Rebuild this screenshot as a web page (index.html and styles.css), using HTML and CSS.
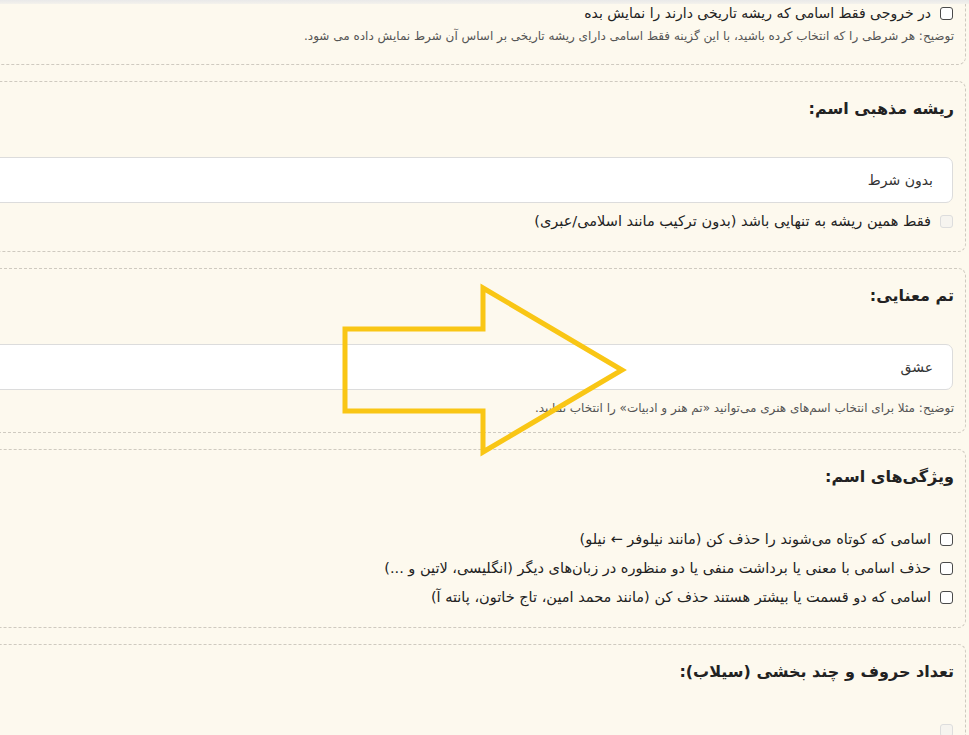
FILE: index.html
```html
<!DOCTYPE html>
<html lang="fa" dir="rtl">
  <head>
    <meta charset="utf-8">
    <link rel="stylesheet" href="styles.css">
  </head>
  <body>
    <div class="topbar"></div>
    <form class="filters">
      <section class="card card--cut">
        <label class="check">
          <input type="checkbox" class="check__box">
          <span>در خروجی فقط اسامی که ریشه تاریخی دارند را نمایش بده</span>
        </label>
        <p class="hint">توضیح: هر شرطی را که انتخاب کرده باشید، با این گزینه فقط اسامی دارای ریشه تاریخی بر اساس آن شرط نمایش داده می شود.</p>
      </section>

      <section class="card">
        <h3 class="card__title">ریشه مذهبی اسم:</h3>
        <div class="field">بدون شرط</div>
        <label class="check check--disabled">
          <input type="checkbox" class="check__box" disabled>
          <span>فقط همین ریشه به تنهایی باشد (بدون ترکیب مانند اسلامی/عبری)</span>
        </label>
      </section>

      <section class="card card--tight">
        <h3 class="card__title">تم معنایی:</h3>
        <div class="field">عشق</div>
        <p class="hint">توضیح: مثلا برای انتخاب اسم‌های هنری می‌توانید «تم هنر و ادبیات» را انتخاب نمایید.</p>
      </section>

      <section class="card">
        <h3 class="card__title card__title--spaced">ویژگی‌های اسم:</h3>
        <label class="check">
          <input type="checkbox" class="check__box">
          <span>اسامی که کوتاه می‌شوند را حذف کن (مانند نیلوفر ← نیلو)</span>
        </label>
        <label class="check">
          <input type="checkbox" class="check__box">
          <span>حذف اسامی با معنی یا برداشت منفی یا دو منظوره در زبان‌های دیگر (انگلیسی، لاتین و ...)</span>
        </label>
        <label class="check">
          <input type="checkbox" class="check__box">
          <span>اسامی که دو قسمت یا بیشتر هستند حذف کن (مانند محمد امین، تاج خاتون، پانته آ)</span>
        </label>
      </section>

      <section class="card">
        <h3 class="card__title card__title--spaced">تعداد حروف و چند بخشی (سیلاب):</h3>
        <label class="check check--disabled">
          <input type="checkbox" class="check__box" disabled aria-label="تک بخشی">
        </label>
      </section>
    </form>

    <!-- the yellow arrow drawn over the screenshot -->
    <svg class="arrow" width="969" height="735" viewBox="0 0 969 735">
      <polygon points="345,329 483,329 483,288 622,370 483,452 483,411 345,411"
               fill="none" stroke="#f9c615" stroke-width="5" stroke-linejoin="miter"/>
    </svg>
  </body>
</html>
```

FILE: styles.css
```css
* {
  box-sizing: border-box;
  margin: 0;
  padding: 0;
}

html, body {
  overflow: hidden;
}

body {
  font-family: "DejaVu Sans", "Noto Sans", sans-serif;
  color: #222;
  background: #fdf9ee;
  height: 735px;
}

.topbar {
  height: 4px;
  background: linear-gradient(#e9e9e9, #f4f2ec);
}

.filters {
  width: 1500px;
  margin-right: 3px;
}

.card {
  border: 1px dashed #cfcac0;
  border-radius: 8px;
  padding: 15px 11px 20px 11px;
  margin-bottom: 16px;
  background: #fdf9ee;
}

.card--cut {
  border-top: 0;
  border-radius: 0 0 8px 8px;
  padding-top: 0;
  padding-bottom: 18px;
}

.card--tight {
  padding-bottom: 14px;
}

.card__title {
  font-size: 16px;
  font-weight: bold;
  line-height: 24px;
  margin-bottom: 36px;
  color: #222;
}

.card__title--spaced {
  margin-bottom: 40px;
}

.field {
  height: 46px;
  width: 1488px;
  margin-right: 1px;
  background: #fff;
  border: 1px solid #dcdcdc;
  border-radius: 7px;
  padding: 0 19px;
  font-size: 14px;
  line-height: 44px;
  color: #333;
}

.check {
  display: flex;
  align-items: center;
  gap: 9px;
  font-size: 14.5px;
  line-height: 20px;
  margin-top: 9px;
  color: #222;
}

.card--cut .check {
  font-size: 14px;
  line-height: 18px;
  margin-top: 0;
}

.field + .check {
  margin-top: 8px;
}

.card__title + .check {
  margin-top: 0;
}

.check__box {
  appearance: none;
  -webkit-appearance: none;
  width: 13px;
  height: 13px;
  margin-right: 1px;
  border: 1px solid #4a4a4a;
  border-radius: 3px;
  background: #fff;
  flex: none;
}

.check--disabled .check__box {
  border-color: #ddd;
  background: #f6f4ef;
}

.hint {
  font-size: 12px;
  line-height: 20px;
  color: #555;
  margin-top: 4px;
}

.field + .hint {
  margin-top: 8px;
}

.arrow {
  position: absolute;
  top: 0;
  left: 0;
  pointer-events: none;
}
```
